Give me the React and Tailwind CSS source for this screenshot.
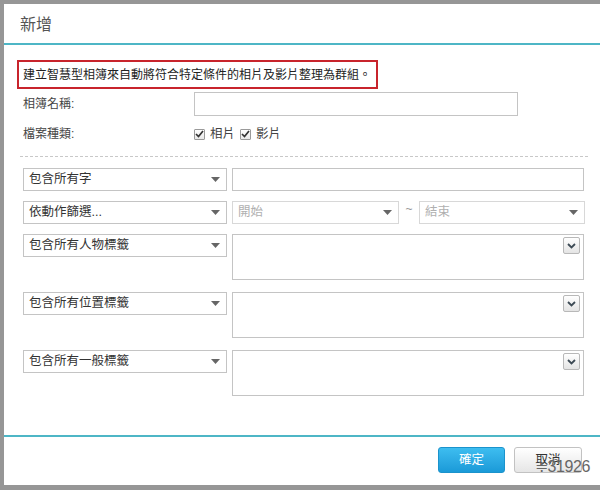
import React from "react";

const font = { fontFamily: '"Liberation Sans", "Noto Sans CJK TC", sans-serif' };

function Caret() {
  return (
    <svg width="9" height="5" viewBox="0 0 9 5" className="shrink-0">
      <path d="M0 0 L9 0 L4.5 5 Z" fill="#666" />
    </svg>
  );
}

function SelectBox({ label, className = "", muted = false }) {
  return (
    <div
      className={
        "h-[23px] border border-[#c4c4c4] bg-white flex items-center justify-between pl-[5px] pr-[6px] " +
        className
      }
    >
      <span className={"text-[12.5px] whitespace-nowrap " + (muted ? "text-[#b0b0b0]" : "text-[#333]")}>
        {label}
      </span>
      <Caret />
    </div>
  );
}

function ChevronBtn() {
  return (
    <div className="w-[17px] h-[17px] border border-[#b8b8b8] rounded-[2px] bg-gradient-to-b from-white to-[#e4e4e4] flex items-center justify-center">
      <svg width="9" height="6" viewBox="0 0 9 6">
        <path d="M1 1 L4.5 4.5 L8 1" fill="none" stroke="#3d4a55" strokeWidth="1.8" />
      </svg>
    </div>
  );
}

function Check() {
  return (
    <span className="w-[11px] h-[11px] border border-[#9a9a9a] bg-gradient-to-b from-white to-[#e8e8e8] rounded-[1px] flex items-center justify-center">
      <svg width="9" height="8" viewBox="0 0 9 8">
        <path d="M1 4 L3.5 6.5 L8 1" fill="none" stroke="#333" strokeWidth="1.7" />
      </svg>
    </span>
  );
}

function TagRow({ label }) {
  return (
    <div className="flex gap-[5px]">
      <SelectBox label={label} className="w-[204px]" />
      <div className="w-[352px] h-[46px] border border-[#c4c4c4] bg-white flex justify-end pt-[2px] pr-[3px]">
        <ChevronBtn />
      </div>
    </div>
  );
}

export default function App() {
  return (
    <div className="w-[600px] h-[490px] bg-[#969696] pt-[4px] pl-[4px] pb-[5px]" style={font}>
      <div className="h-full bg-white flex flex-col">
        <div className="h-[41px] border-b-2 border-[#4db6c6] flex items-center pl-[16px] pt-[2px]">
          <span className="text-[16px] text-[#555]">新增</span>
        </div>

        <div className="flex-1 pl-[13px] pt-[15px]">
          <div className="w-[361px] h-[29px] border-2 border-[#c8242c] flex items-center pl-[4px]">
            <span className="text-[12px] text-[#222] whitespace-nowrap">
              建立智慧型相簿來自動將符合特定條件的相片及影片整理為群組。
            </span>
          </div>

          <div className="flex items-center mt-[3px] pl-[6px]">
            <span className="w-[171px] text-[12px] text-[#444]">相簿名稱:</span>
            <div className="w-[324px] h-[24px] border border-[#c4c4c4]" />
          </div>

          <div className="flex items-center mt-[9px] pl-[6px] h-[18px]">
            <span className="w-[171px] text-[12px] text-[#444]">檔案種類:</span>
            <div className="flex items-center gap-[5px] text-[12.5px] text-[#444]">
              <Check />
              <span>相片</span>
              <Check />
              <span>影片</span>
            </div>
          </div>

          <div className="mt-[13px] ml-[3px] w-[568px] border-t border-dashed border-[#c8c8c8]" />

          <div className="pl-[6px] mt-[11px] flex flex-col">
            <div className="flex gap-[5px]">
              <SelectBox label="包含所有字" className="w-[204px]" />
              <div className="w-[352px] h-[23px] border border-[#c4c4c4]" />
            </div>

            <div className="flex gap-[5px] items-center mt-[10px]">
              <SelectBox label="依動作篩選..." className="w-[204px]" />
              <SelectBox label="開始" muted className="w-[167px] border-[#d8d8d8]" />
              <span className="w-[10px] text-[12px] text-[#999] -mt-[8px] text-center">~</span>
              <SelectBox label="結束" muted className="w-[166px] border-[#d8d8d8]" />
            </div>

            <div className="mt-[10px] flex flex-col gap-[12px]">
              <TagRow label="包含所有人物標籤" />
              <TagRow label="包含所有位置標籤" />
              <TagRow label="包含所有一般標籤" />
            </div>
          </div>
        </div>

        <div className="h-[50px] border-t-2 border-[#4db6c6] flex justify-end items-start pt-[10px] pr-[18px] gap-[9px] relative">
          <button className="w-[67px] h-[26px] rounded-[3px] border border-[#1b93cc] bg-gradient-to-b from-[#3dbdf0] to-[#1a9ad8] text-white text-[12.5px]">
            確定
          </button>
          <button className="w-[68px] h-[26px] rounded-[3px] border border-[#c2c2c2] bg-gradient-to-b from-white to-[#e6e6e6] text-[#333] text-[12.5px]">
            取消
          </button>
          <span className="absolute right-[10px] top-[22px] text-[16px] text-[#666] leading-none tracking-tight">
            ≑31926
          </span>
        </div>
      </div>
    </div>
  );
}
